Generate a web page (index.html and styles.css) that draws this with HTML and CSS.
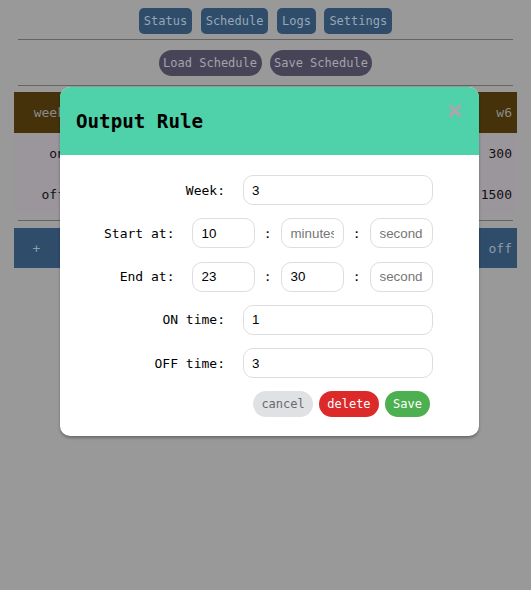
FILE: index.html
```html
<!DOCTYPE html>
<html>
<head>
<meta charset="utf-8">
<link rel="stylesheet" href="styles.css">
</head>
<body>
<div class="page">
  <nav class="tabs">
    <button class="tab">Status</button>
    <button class="tab">Schedule</button>
    <button class="tab">Logs</button>
    <button class="tab">Settings</button>
  </nav>
  <hr class="rule">
  <div class="actions">
    <button class="pill">Load Schedule</button>
    <button class="pill">Save Schedule</button>
  </div>
  <hr class="rule rule-b">
  <table class="schedule">
    <colgroup>
      <col class="c-first"><col><col><col><col><col><col><col class="c-last">
    </colgroup>
    <thead>
      <tr><th>week</th><th>w0</th><th>w1</th><th>w2</th><th>w3</th><th>w4</th><th>w5</th><th>w6</th></tr>
    </thead>
    <tbody>
      <tr class="r-on"><td>on</td><td>300</td><td>300</td><td>300</td><td>300</td><td>300</td><td>300</td><td>300</td></tr>
      <tr class="r-off"><td>off</td><td>1500</td><td>1500</td><td>1500</td><td>1500</td><td>1500</td><td>1500</td><td>1500</td></tr>
    </tbody>
  </table>
  <hr class="rule rule-c">
  <div class="controls">
    <span class="ctl-add">+</span>
    <span class="ctl-off">off</span>
  </div>
</div>

<div class="modal">
  <div class="modal-head">
    <h2 class="modal-title">Output Rule</h2>
    <svg class="modal-close" width="14" height="14" viewBox="0 0 14 14">
      <path d="M1.5 1.5 L12.5 12.5 M12.5 1.5 L1.5 12.5" stroke="#a8a8a8" stroke-width="3.2" stroke-linecap="butt" fill="none"/>
    </svg>
  </div>
  <div class="modal-body">
    <div class="row">
      <label class="lbl">Week:</label>
      <input class="field field-wide" type="text" value="3">
    </div>
    <div class="row">
      <label class="lbl">Start at:</label>
      <div class="time">
        <input class="field field-t" type="text" value="10">
        <span class="colon">:</span>
        <input class="field field-t" type="text" placeholder="minutes">
        <span class="colon">:</span>
        <input class="field field-t" type="text" placeholder="seconds">
      </div>
    </div>
    <div class="row">
      <label class="lbl">End at:</label>
      <div class="time">
        <input class="field field-t" type="text" value="23">
        <span class="colon">:</span>
        <input class="field field-t" type="text" value="30">
        <span class="colon">:</span>
        <input class="field field-t" type="text" placeholder="seconds">
      </div>
    </div>
    <div class="row">
      <label class="lbl">ON time:</label>
      <input class="field field-wide" type="text" value="1">
    </div>
    <div class="row">
      <label class="lbl">OFF time:</label>
      <input class="field field-wide" type="text" value="3">
    </div>
    <div class="btns">
      <button class="btn btn-cancel">cancel</button>
      <button class="btn btn-delete">delete</button>
      <button class="btn btn-save">Save</button>
    </div>
  </div>
</div>
</body>
</html>
```

FILE: styles.css
```css
html, body {
  margin: 0;
  padding: 0;
  background: #999999;
  font-family: "DejaVu Sans Mono", monospace;
  font-size: 13px;
}

.page {
  padding: 8px 14px 0 14px;
}

.tabs {
  display: flex;
  justify-content: center;
  gap: 8.5px;
}

.tab {
  height: 26px;
  padding: 0 5px;
  border: none;
  border-radius: 5px;
  background: #2f4d6b;
  color: #97a6b4;
  font-family: "DejaVu Sans Mono", monospace;
  font-size: 12px;
  margin: 0;
}

.rule {
  margin: 5px 4px 0 4px;
  border: none;
  border-top: 1px solid #646464;
  height: 0;
}

.rule-b { margin-top: 9px; }
.rule-c { margin-top: 6px; }

.actions {
  display: flex;
  justify-content: center;
  gap: 8px;
  margin-top: 10px;
}

.pill {
  height: 26px;
  padding: 0 4.5px;
  border: none;
  border-radius: 13px;
  background: #484458;
  color: #a3a2aa;
  font-family: "DejaVu Sans Mono", monospace;
  font-size: 12px;
  margin: 0;
}

.schedule {
  width: 100%;
  margin-top: 6px;
  border-collapse: collapse;
  table-layout: fixed;
}

.c-first { width: 56px; }
.c-last { width: 38px; }

.schedule th {
  height: 41px;
  padding: 0 5px 0 0;
  background: #45320b;
  color: #8b8b8b;
  font-weight: normal;
  text-align: right;
  font-size: 13px;
}

.schedule td {
  padding: 0 5px 0 0;
  background: #9a969c;
  color: #111111;
  text-align: right;
  font-size: 13px;
}

.r-on td { height: 41px; }
.r-off td { height: 40px; }

.controls {
  display: flex;
  justify-content: space-between;
  align-items: center;
  height: 40px;
  margin-top: 7px;
  background: #2f4d6b;
  color: #8e9ca9;
  font-size: 13px;
}

.ctl-add {
  width: 45px;
  text-align: center;
}

.ctl-off {
  padding-right: 5px;
}

.modal {
  position: absolute;
  top: 87px;
  left: 60px;
  width: 419px;
  background: #ffffff;
  border-radius: 10px;
  overflow: hidden;
  box-shadow: 0 2px 3px rgba(0, 0, 0, 0.3);
}

.modal-head {
  position: relative;
  height: 68px;
  background: #4fd1a9;
  display: flex;
  align-items: center;
  padding-left: 16px;
}

.modal-title {
  margin: 0;
  font-family: "DejaVu Sans Mono", monospace;
  font-weight: bold;
  font-size: 19.2px;
  color: #000000;
}

.modal-close {
  position: absolute;
  top: 17px;
  right: 17px;
}

.modal-body {
  display: flex;
  flex-direction: column;
  gap: 13.3px;
  padding: 20px 0 19px 0;
}

.row {
  display: flex;
  justify-content: flex-end;
  align-items: center;
  gap: 17.5px;
  padding-right: 46.5px;
  height: 30px;
}

.lbl {
  font-family: "DejaVu Sans Mono", monospace;
  font-size: 13px;
  color: #000000;
}

.time {
  display: flex;
  align-items: center;
}

.field {
  box-sizing: border-box;
  height: 30px;
  margin: 0;
  padding: 0 8.5px;
  border: 1.5px solid #dddddd;
  border-radius: 10px;
  background: #ffffff;
  font-family: "Liberation Sans", Arial, sans-serif;
  font-size: 13.33px;
  color: #000000;
  outline: none;
}

.field::placeholder {
  color: #767676;
}

.field-wide { width: 190px; }
.field-t { width: 62.5px; }

.colon {
  width: 26.5px;
  text-align: center;
  font-family: "DejaVu Sans Mono", monospace;
  font-size: 13px;
  color: #000000;
}

.btns {
  display: flex;
  justify-content: flex-end;
  gap: 6.5px;
  padding-right: 49px;
}

.btn {
  height: 26px;
  margin: 0;
  padding: 0 8px;
  border: none;
  border-radius: 13px;
  font-family: "DejaVu Sans Mono", monospace;
  font-size: 12px;
}

.btn-cancel { background: #e0e1e3; color: #66696d; }
.btn-delete { background: #dc2a2a; color: #ffffff; }
.btn-save { background: #4caf50; color: #ffffff; }
```
